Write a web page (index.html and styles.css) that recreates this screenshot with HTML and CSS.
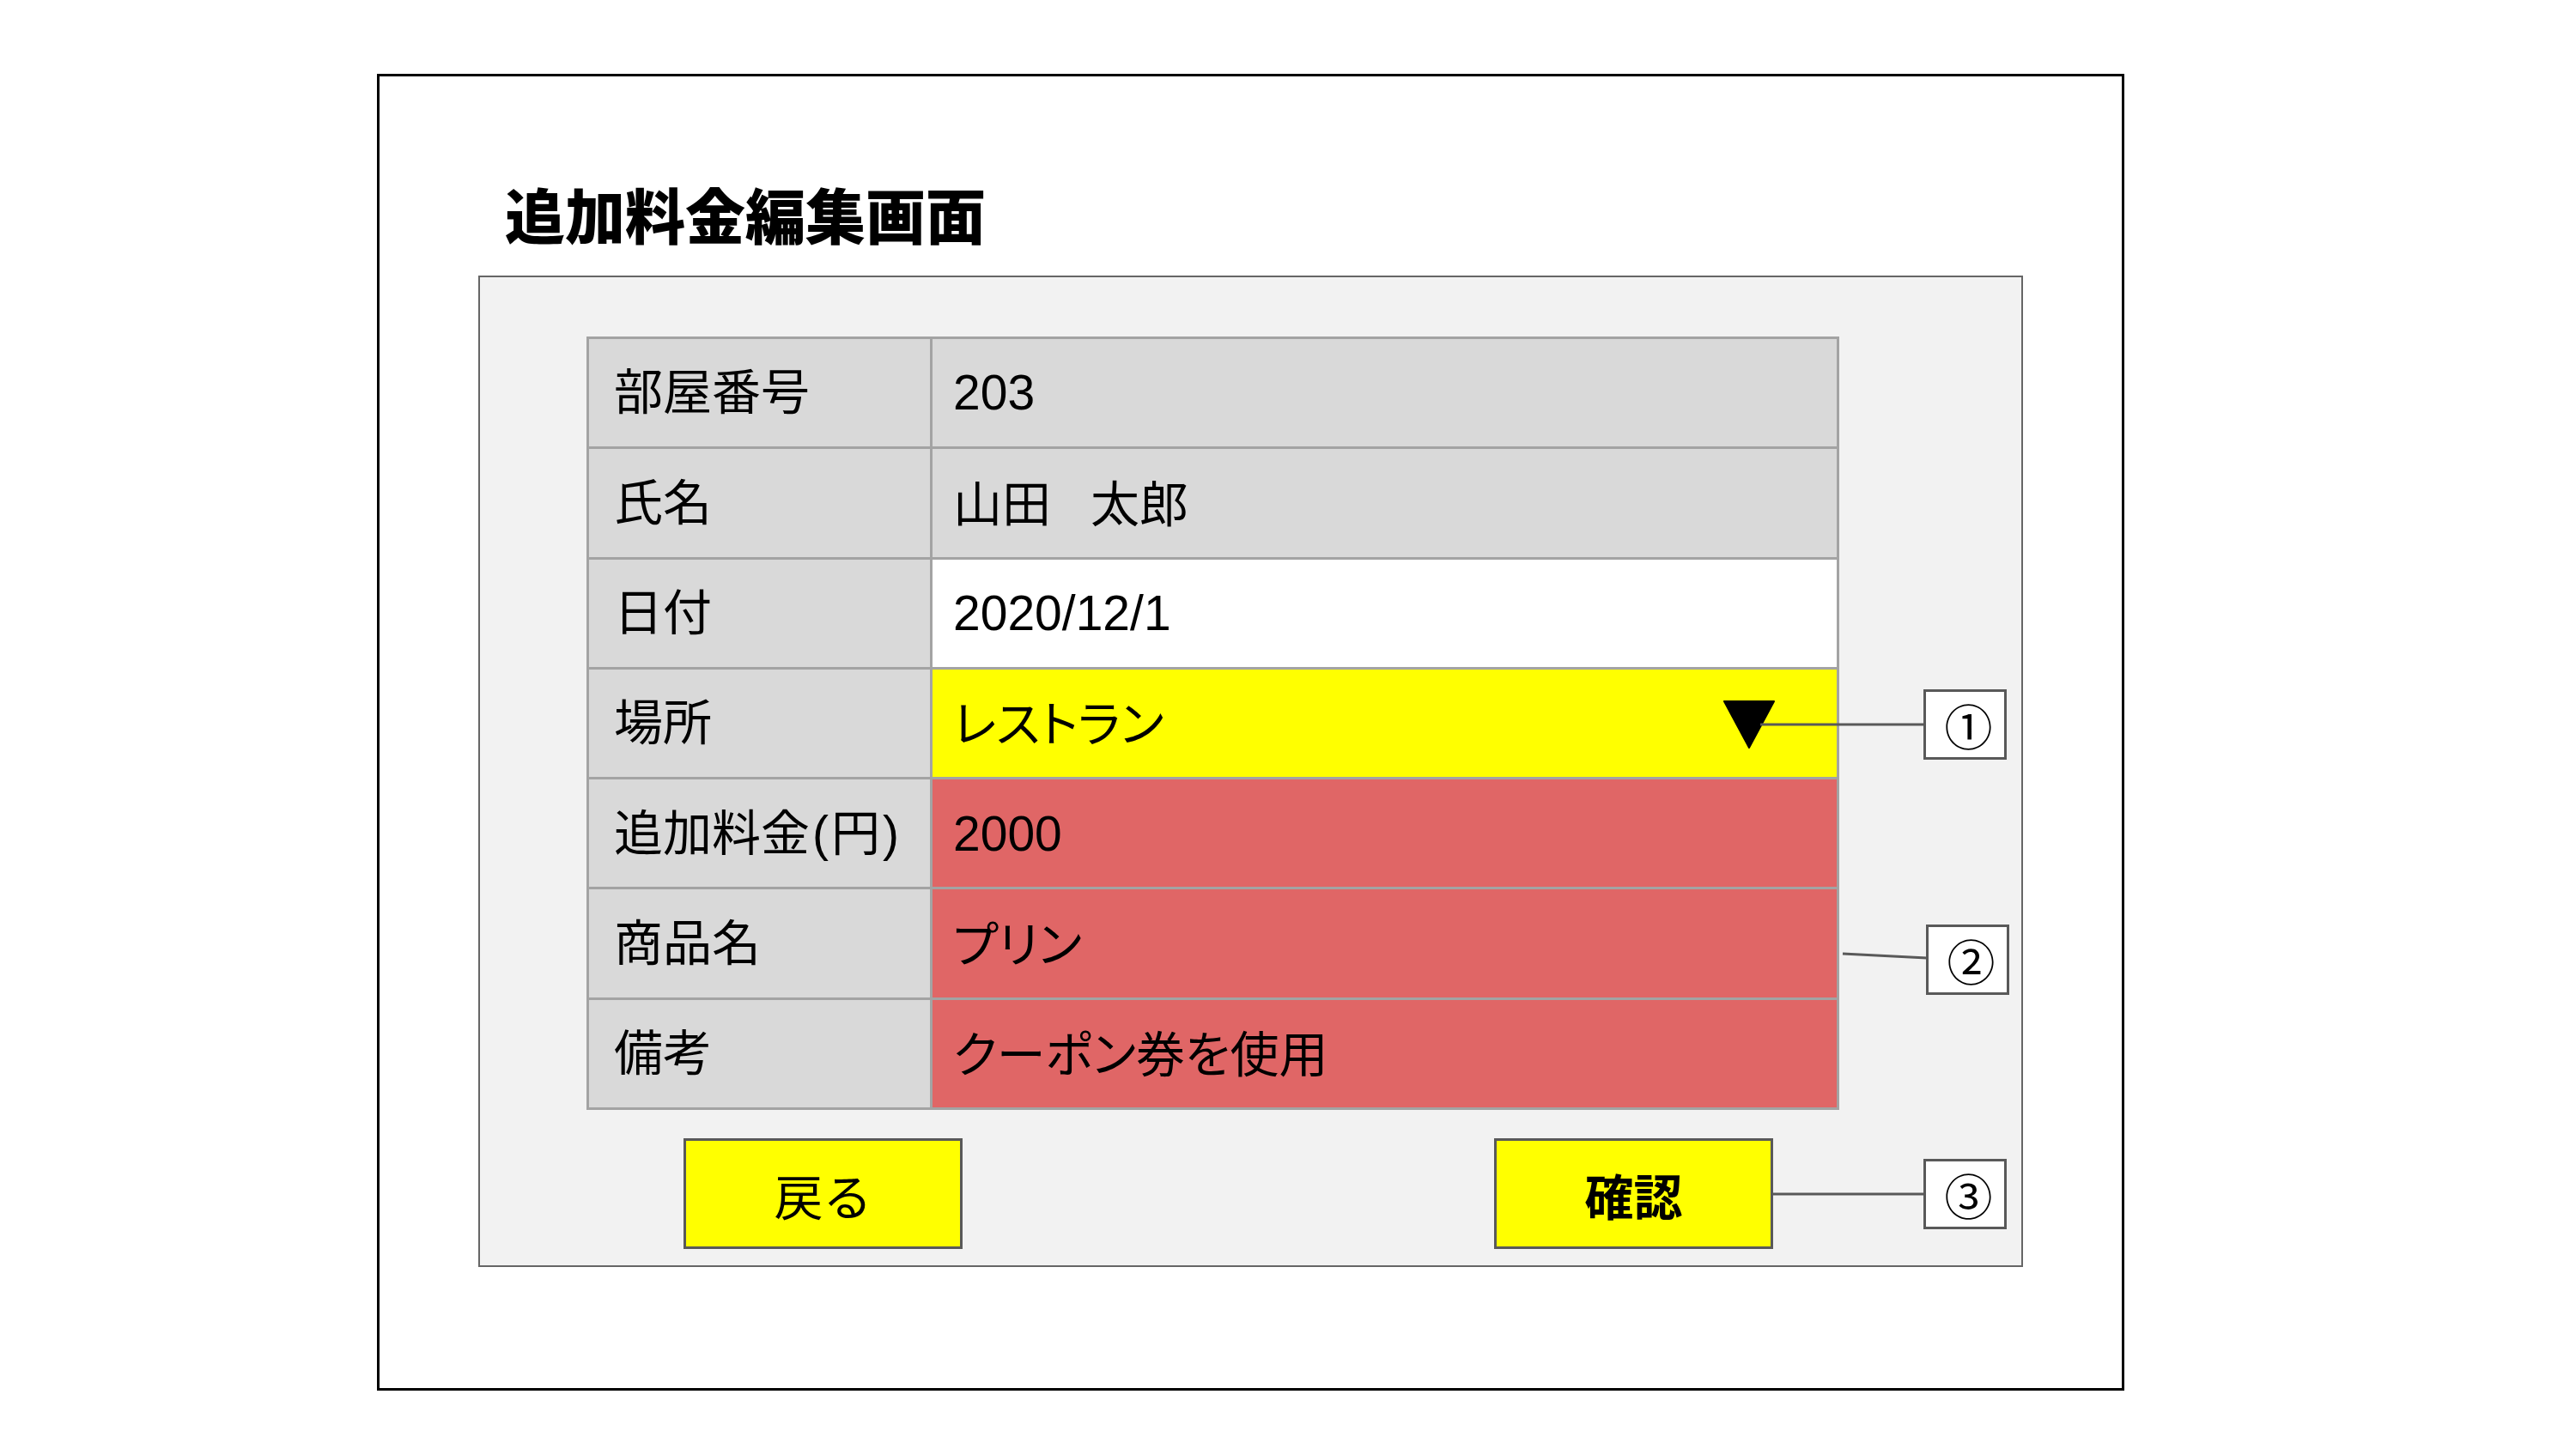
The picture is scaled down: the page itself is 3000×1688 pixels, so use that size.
FILE: index.html
```html
<!DOCTYPE html>
<html lang="ja">
<head>
<meta charset="utf-8">
<title>追加料金編集画面</title>
<link rel="stylesheet" href="styles.css">
</head>
<body>
<div class="frame">
  <h1 class="title">追加料金編集画面</h1>
  <div class="panel">
    <div class="grid">
      <div class="cell label">部屋番号</div>
      <div class="cell value gray">203</div>
      <div class="cell label">氏名</div>
      <div class="cell value gray jp">山田<span class="sp">　</span>太郎</div>
      <div class="cell label">日付</div>
      <div class="cell value white">2020/12/1</div>
      <div class="cell label">場所</div>
      <div class="cell value yellow jp">
        <span>レストラン</span>
        <svg class="tri" width="60" height="56" viewBox="0 0 60 56"><path d="M1 1 H59 L30 55 Z" fill="#000" stroke="#000" stroke-width="2" stroke-linejoin="round"/></svg>
      </div>
      <div class="cell label">追加料金<span class="paren">(</span>円<span class="paren">)</span></div>
      <div class="cell value red">2000</div>
      <div class="cell label">商品名</div>
      <div class="cell value red jp">プリン</div>
      <div class="cell label">備考</div>
      <div class="cell value red jp">クーポン券を使用</div>
    </div>
    <div class="buttons">
      <div class="btn">戻る</div>
      <div class="btn bold">確認</div>
    </div>
  </div>
</div>

<svg class="lines" width="3000" height="1688" viewBox="0 0 3000 1688">
  <line x1="2050" y1="844" x2="2240" y2="844" stroke="#595959" stroke-width="3"/>
  <line x1="2146" y1="1111" x2="2244" y2="1116" stroke="#595959" stroke-width="3"/>
  <line x1="2065" y1="1391" x2="2240" y2="1391" stroke="#595959" stroke-width="3"/>
</svg>
<div class="callout c1">①</div>
<div class="callout c2">②</div>
<div class="callout c3">③</div>
</body>
</html>
```
FILE: styles.css
```css
html, body {
  margin: 0;
  padding: 0;
  background: #ffffff;
}
body {
  position: relative;
  width: 3000px;
  height: 1688px;
  overflow: hidden;
  font-family: "Liberation Sans", "Noto Sans CJK JP", sans-serif;
  color: #000;
}
.frame {
  box-sizing: border-box;
  margin: 86px 0 0 439px;
  width: 2035px;
  height: 1534px;
  border: 3px solid #000;
  display: flex;
  flex-direction: column;
  align-items: flex-start;
}
.title {
  margin: 125px 0 0 146px;
  font-family: "Noto Sans CJK JP", sans-serif;
  font-weight: 900;
  font-size: 70px;
  line-height: 70px;
}
.panel {
  box-sizing: border-box;
  margin: 37px 0 0 115px;
  width: 1799px;
  height: 1155px;
  border: 2px solid #666666;
  background: #f2f2f2;
  padding: 69px 0 0 124px;
  display: flex;
  flex-direction: column;
  align-items: flex-start;
}
.grid {
  box-sizing: border-box;
  width: 1459px;
  height: 901px;
  display: grid;
  grid-template-columns: 397px 1053px;
  grid-template-rows: repeat(7, 1fr);
  gap: 3px;
  border: 3px solid #a3a3a3;
  background: #a3a3a3;
}
.cell {
  display: flex;
  align-items: center;
  font-size: 57px;
  line-height: 1.2;
  white-space: pre;
}
.label {
  background: #d9d9d9;
  padding-left: 29px;
}
.paren {
  padding: 0 3px;
}
.value {
  padding-left: 24px;
}
.jp {
  font-feature-settings: "palt" 1;
  padding-top: 4px;
}
.sp {
  letter-spacing: -11px;
}
.gray { background: #d9d9d9; }
.white { background: #ffffff; }
.yellow { background: #ffff00; }
.red { background: #e06666; }
.tri {
  margin-left: auto;
  margin-right: 72px;
}
.buttons {
  margin-top: 33px;
  padding-left: 113px;
  display: flex;
  gap: 619px;
}
.btn {
  box-sizing: border-box;
  width: 325px;
  height: 129px;
  border: 3px solid #595959;
  background: #ffff00;
  display: flex;
  align-items: center;
  justify-content: center;
  font-family: "Noto Sans CJK JP", sans-serif;
  font-size: 57px;
}
.btn.bold {
  font-weight: 700;
}
.lines {
  position: absolute;
  left: 0;
  top: 0;
}
.callout {
  position: absolute;
  box-sizing: border-box;
  width: 97px;
  height: 82px;
  border: 3px solid #595959;
  background: #ffffff;
  display: flex;
  align-items: center;
  justify-content: center;
  font-family: "Noto Sans CJK JP", sans-serif;
  font-size: 56px;
  line-height: 1;
  padding-left: 8px;
}
.c1 { left: 2240px; top: 803px; }
.c2 { left: 2243px; top: 1077px; }
.c3 { left: 2240px; top: 1350px; }
```
